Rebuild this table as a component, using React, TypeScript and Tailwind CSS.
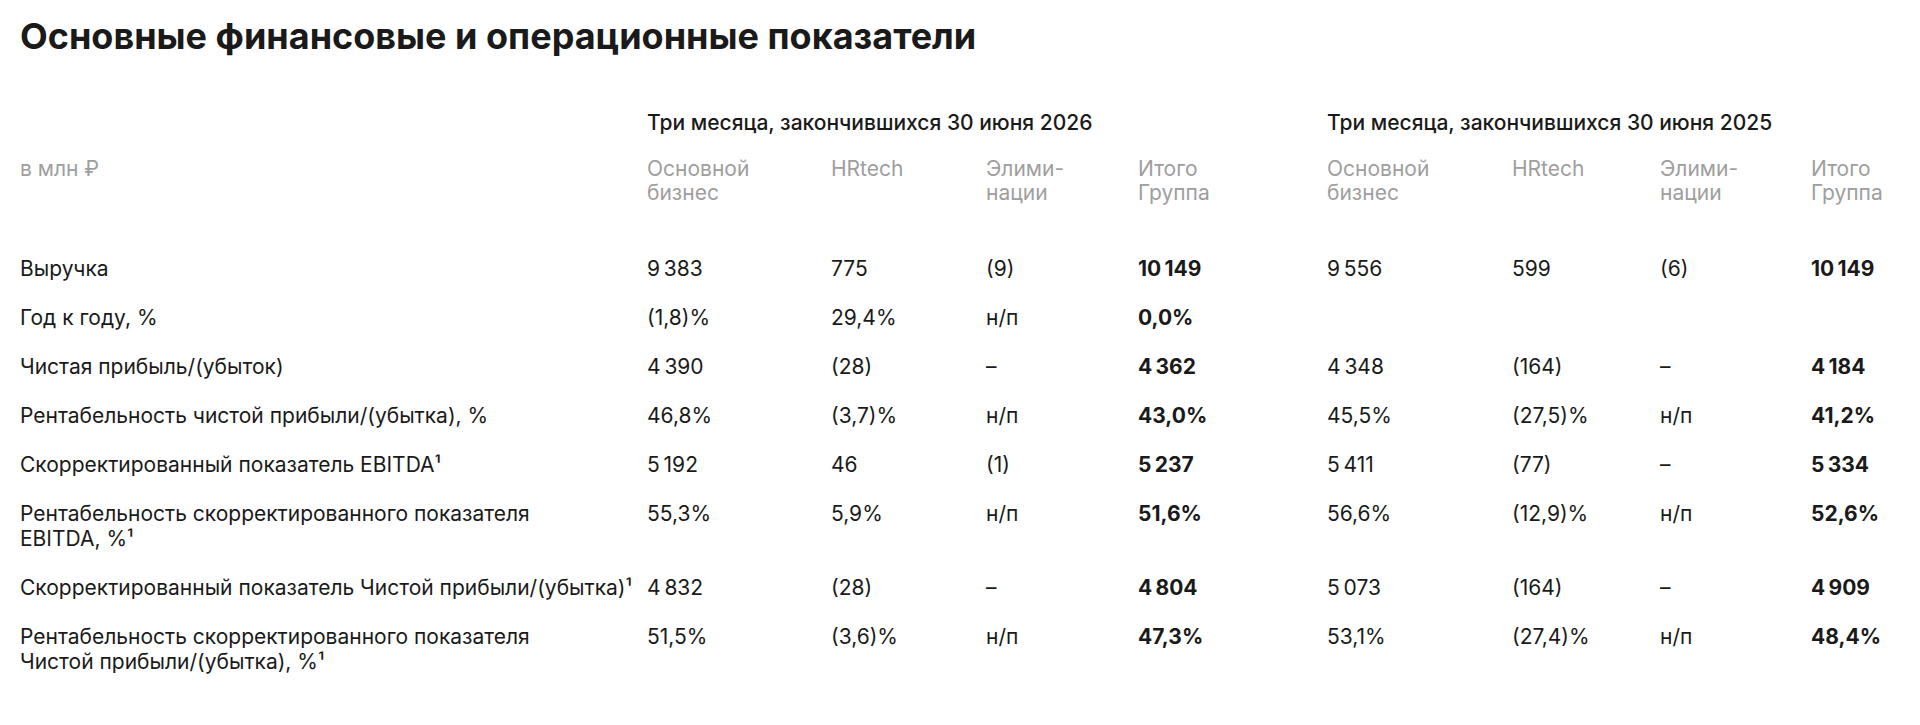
import React from 'react';

type Row = {
  label: string[];
  current: string[];
  previous: string[];
};

// thin space for thousands
const n = (s: string) => s.replace(' ', '\u2009');

const rows: Row[] = [
  { label: ['Выручка'], current: ['9 383', '775', '(9)', '10 149'], previous: ['9 556', '599', '(6)', '10 149'] },
  { label: ['Год к году, %'], current: ['(1,8)%', '29,4%', 'н/п', '0,0%'], previous: ['', '', '', ''] },
  { label: ['Чистая прибыль/(убыток)'], current: ['4 390', '(28)', '–', '4 362'], previous: ['4 348', '(164)', '–', '4 184'] },
  {
    label: ['Рентабельность чистой прибыли/(убытка), %'],
    current: ['46,8%', '(3,7)%', 'н/п', '43,0%'],
    previous: ['45,5%', '(27,5)%', 'н/п', '41,2%'],
  },
  {
    label: ['Скорректированный показатель EBITDA¹'],
    current: ['5 192', '46', '(1)', '5 237'],
    previous: ['5 411', '(77)', '–', '5 334'],
  },
  {
    label: ['Рентабельность скорректированного показателя', 'EBITDA, %¹'],
    current: ['55,3%', '5,9%', 'н/п', '51,6%'],
    previous: ['56,6%', '(12,9)%', 'н/п', '52,6%'],
  },
  {
    label: ['Скорректированный показатель Чистой прибыли/(убытка)¹'],
    current: ['4 832', '(28)', '–', '4 804'],
    previous: ['5 073', '(164)', '–', '4 909'],
  },
  {
    label: ['Рентабельность скорректированного показателя', 'Чистой прибыли/(убытка), %¹'],
    current: ['51,5%', '(3,6)%', 'н/п', '47,3%'],
    previous: ['53,1%', '(27,4)%', 'н/п', '48,4%'],
  },
];

const colHeaders = [
  ['Основной', 'бизнес'],
  ['HRtech'],
  ['Элими-', 'нации'],
  ['Итого', 'Группа'],
];

const gridCols = 'grid grid-cols-[627px_184px_155px_152px_189px_185px_148px_151px_1fr]';

const Lines = ({ lines }: { lines: string[] }) => (
  <div>
    {lines.map((l, i) => (
      <div key={i}>{l}</div>
    ))}
  </div>
);

export default function App() {
  return (
    <div
      className="min-h-screen bg-white pl-5 pt-[14px] text-[#1a1a1a]"
      style={{ fontFamily: 'Inter, "Noto Sans", sans-serif' }}
    >
      <h1 className="text-[36px] leading-[44px] font-bold">
        Основные финансовые и операционные показатели
      </h1>

      {/* Period headers */}
      <div className={`${gridCols} mt-[52px] text-[21px] leading-[25px] font-medium`}>
        <div />
        <div className="col-span-4">Три месяца, закончившихся 30 июня 2026</div>
        <div className="col-span-4">Три месяца, закончившихся 30 июня 2025</div>
      </div>

      {/* Column headers */}
      <div className={`${gridCols} mt-[22px] text-[21px] leading-[24px] text-[#9e9e9e]`}>
        <div>в млн ₽</div>
        {[...colHeaders, ...colHeaders].map((h, i) => (
          <Lines key={i} lines={h} />
        ))}
      </div>

      {/* Data rows */}
      <div className="mt-[39px] text-[21px] leading-[25px]">
        {rows.map((row, idx) => (
          <div key={idx} className={`${gridCols} py-3`}>
            <Lines lines={row.label} />
            {[...row.current, ...row.previous].map((v, i) => (
              <div key={i} className={i % 4 === 3 ? 'font-bold' : ''}>
                {n(v)}
              </div>
            ))}
          </div>
        ))}
      </div>
    </div>
  );
}
